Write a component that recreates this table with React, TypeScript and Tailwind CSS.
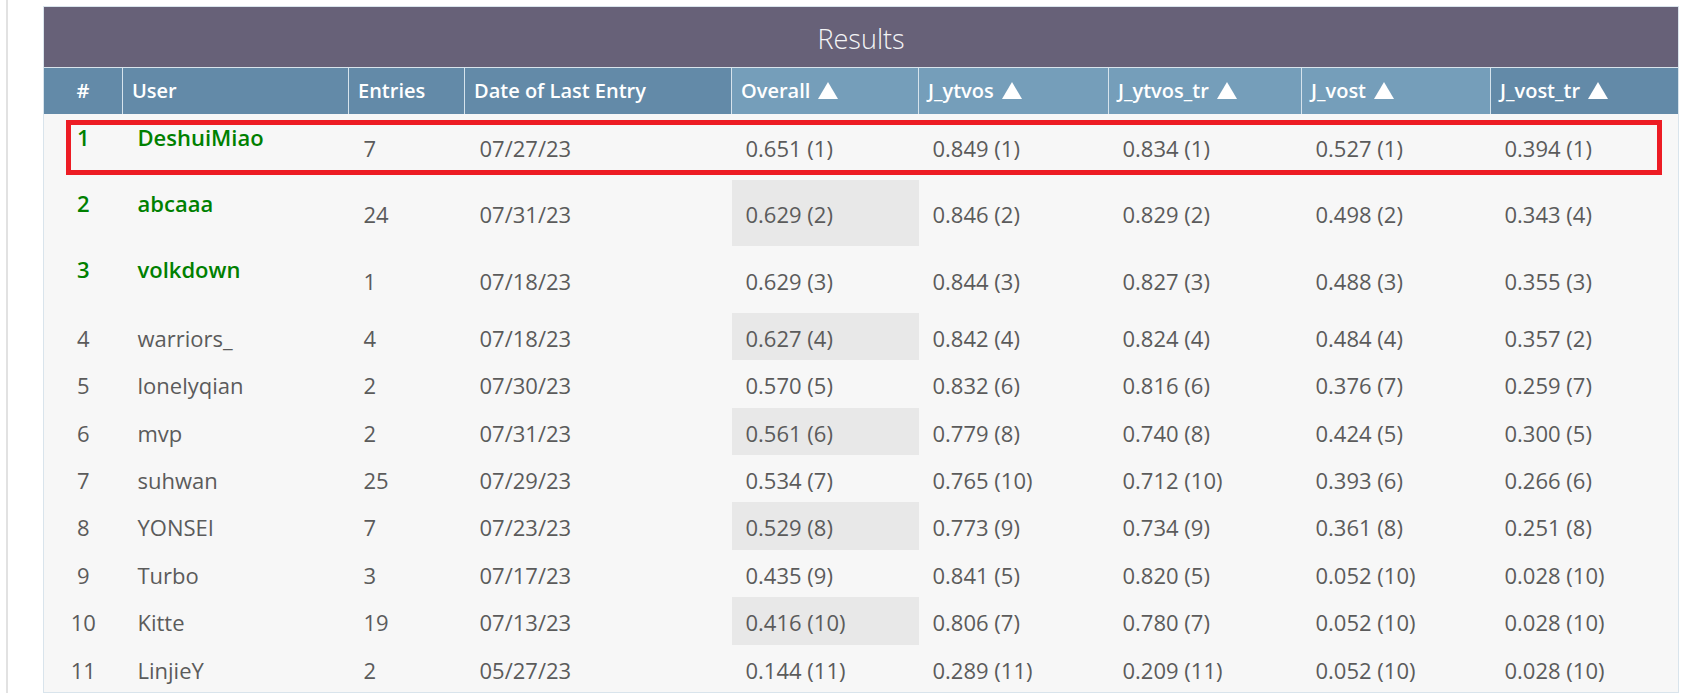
import React from 'react';

interface Row {
  rank: number;
  user: string;
  entries: number;
  date: string;
  scores: string[];
}

const rows: Row[] = [
  { rank: 1, user: 'DeshuiMiao', entries: 7, date: '07/27/23', scores: ['0.651 (1)', '0.849 (1)', '0.834 (1)', '0.527 (1)', '0.394 (1)'] },
  { rank: 2, user: 'abcaaa', entries: 24, date: '07/31/23', scores: ['0.629 (2)', '0.846 (2)', '0.829 (2)', '0.498 (2)', '0.343 (4)'] },
  { rank: 3, user: 'volkdown', entries: 1, date: '07/18/23', scores: ['0.629 (3)', '0.844 (3)', '0.827 (3)', '0.488 (3)', '0.355 (3)'] },
  { rank: 4, user: 'warriors_', entries: 4, date: '07/18/23', scores: ['0.627 (4)', '0.842 (4)', '0.824 (4)', '0.484 (4)', '0.357 (2)'] },
  { rank: 5, user: 'lonelyqian', entries: 2, date: '07/30/23', scores: ['0.570 (5)', '0.832 (6)', '0.816 (6)', '0.376 (7)', '0.259 (7)'] },
  { rank: 6, user: 'mvp', entries: 2, date: '07/31/23', scores: ['0.561 (6)', '0.779 (8)', '0.740 (8)', '0.424 (5)', '0.300 (5)'] },
  { rank: 7, user: 'suhwan', entries: 25, date: '07/29/23', scores: ['0.534 (7)', '0.765 (10)', '0.712 (10)', '0.393 (6)', '0.266 (6)'] },
  { rank: 8, user: 'YONSEI', entries: 7, date: '07/23/23', scores: ['0.529 (8)', '0.773 (9)', '0.734 (9)', '0.361 (8)', '0.251 (8)'] },
  { rank: 9, user: 'Turbo', entries: 3, date: '07/17/23', scores: ['0.435 (9)', '0.841 (5)', '0.820 (5)', '0.052 (10)', '0.028 (10)'] },
  { rank: 10, user: 'Kitte', entries: 19, date: '07/13/23', scores: ['0.416 (10)', '0.806 (7)', '0.780 (7)', '0.052 (10)', '0.028 (10)'] },
  { rank: 11, user: 'LinjieY', entries: 2, date: '05/27/23', scores: ['0.144 (11)', '0.289 (11)', '0.209 (11)', '0.052 (10)', '0.028 (10)'] },
];

const columns = [
  { label: '#', width: 'w-[79px]', light: false, arrow: false },
  { label: 'User', width: 'w-[226px]', light: false, arrow: false },
  { label: 'Entries', width: 'w-[116px]', light: false, arrow: false },
  { label: 'Date of Last Entry', width: 'w-[267px]', light: false, arrow: false },
  { label: 'Overall', width: 'w-[187px]', light: true, arrow: true },
  { label: 'J_ytvos', width: 'w-[190px]', light: true, arrow: true },
  { label: 'J_ytvos_tr', width: 'w-[193px]', light: true, arrow: true },
  { label: 'J_vost', width: 'w-[189px]', light: true, arrow: true },
  { label: 'J_vost_tr', width: 'w-[188px]', light: false, arrow: true },
];

function SortArrow() {
  return (
    <svg width="20" height="17" viewBox="0 0 20 17" className="inline-block ml-[8px] align-[-1px]">
      <path d="M10 0 L20 17 L0 17 Z" fill="#ffffff" />
    </svg>
  );
}

export default function App() {
  return (
    <div className="h-[693px] overflow-hidden bg-white flex font-['Open_Sans',sans-serif]">
      <div className="ml-[6px] w-[2px] bg-[#e2e2e2]" />
      <div className="pl-[35px] pt-[6px]">
        <div className="relative">
          <table className="table-fixed border-collapse w-[1635px] border border-[#d9e4ec]">
            <colgroup>
              {columns.map((c) => (
                <col key={c.label} className={c.width} />
              ))}
            </colgroup>
            <thead>
              <tr>
                <th
                  colSpan={9}
                  className="h-[61px] pt-[4px] bg-[#676178] text-[#f4f4f6] text-[27px] font-light text-center border-b border-[#d9e4ec]"
                >
                  Results
                </th>
              </tr>
              <tr>
                {columns.map((c, i) => (
                  <th
                    key={c.label}
                    className={`h-[46px] border-x border-[#d6e3ec] text-white text-[20px] font-semibold whitespace-nowrap ${
                      i === 0 ? 'text-center' : 'text-left pl-[9px]'
                    } ${c.light ? 'bg-[#759eba]' : 'bg-[#638aa8]'}`}
                  >
                    {c.label}
                    {c.arrow && <SortArrow />}
                  </th>
                ))}
              </tr>
            </thead>
            <tbody className="bg-[#f7f7f7] text-[#5b5b5b] text-[22px] leading-[31.4px]">
              {rows.map((r) => {
                const top = r.rank <= 3;
                return (
                  <tr key={r.rank}>
                    <td
                      className={`text-center ${
                        top ? 'py-[8px] align-top text-[#008000] font-semibold' : 'pt-[10px] pb-[6px] align-middle'
                      }`}
                    >
                      {r.rank}
                    </td>
                    <td className={`pl-[15px] ${top ? 'py-[8px] align-top' : 'pt-[10px] pb-[6px] align-middle'}`}>
                      {top ? (
                        <>
                          <div className="text-[#008000] font-semibold">{r.user}</div>
                          <div className="h-[19px]" />
                        </>
                      ) : (
                        r.user
                      )}
                    </td>
                    <td className="pt-[10px] pb-[6px] pl-[15px] align-middle">{r.entries}</td>
                    <td className="pt-[10px] pb-[6px] pl-[15px] align-middle">{r.date}</td>
                    {r.scores.map((s, i) => (
                      <td
                        key={i}
                        className={`pt-[10px] pb-[6px] pl-[14px] align-middle whitespace-nowrap ${
                          i === 0 && r.rank % 2 === 0 ? 'bg-[#e8e8e8]' : ''
                        }`}
                      >
                        {s}
                      </td>
                    ))}
                  </tr>
                );
              })}
            </tbody>
          </table>
          {/* annotation box round the first row */}
          <div className="absolute left-[23px] top-[114px] w-[1596px] h-[55px] border-[5px] border-[#ed1c24] pointer-events-none" />
        </div>
      </div>
    </div>
  );
}
